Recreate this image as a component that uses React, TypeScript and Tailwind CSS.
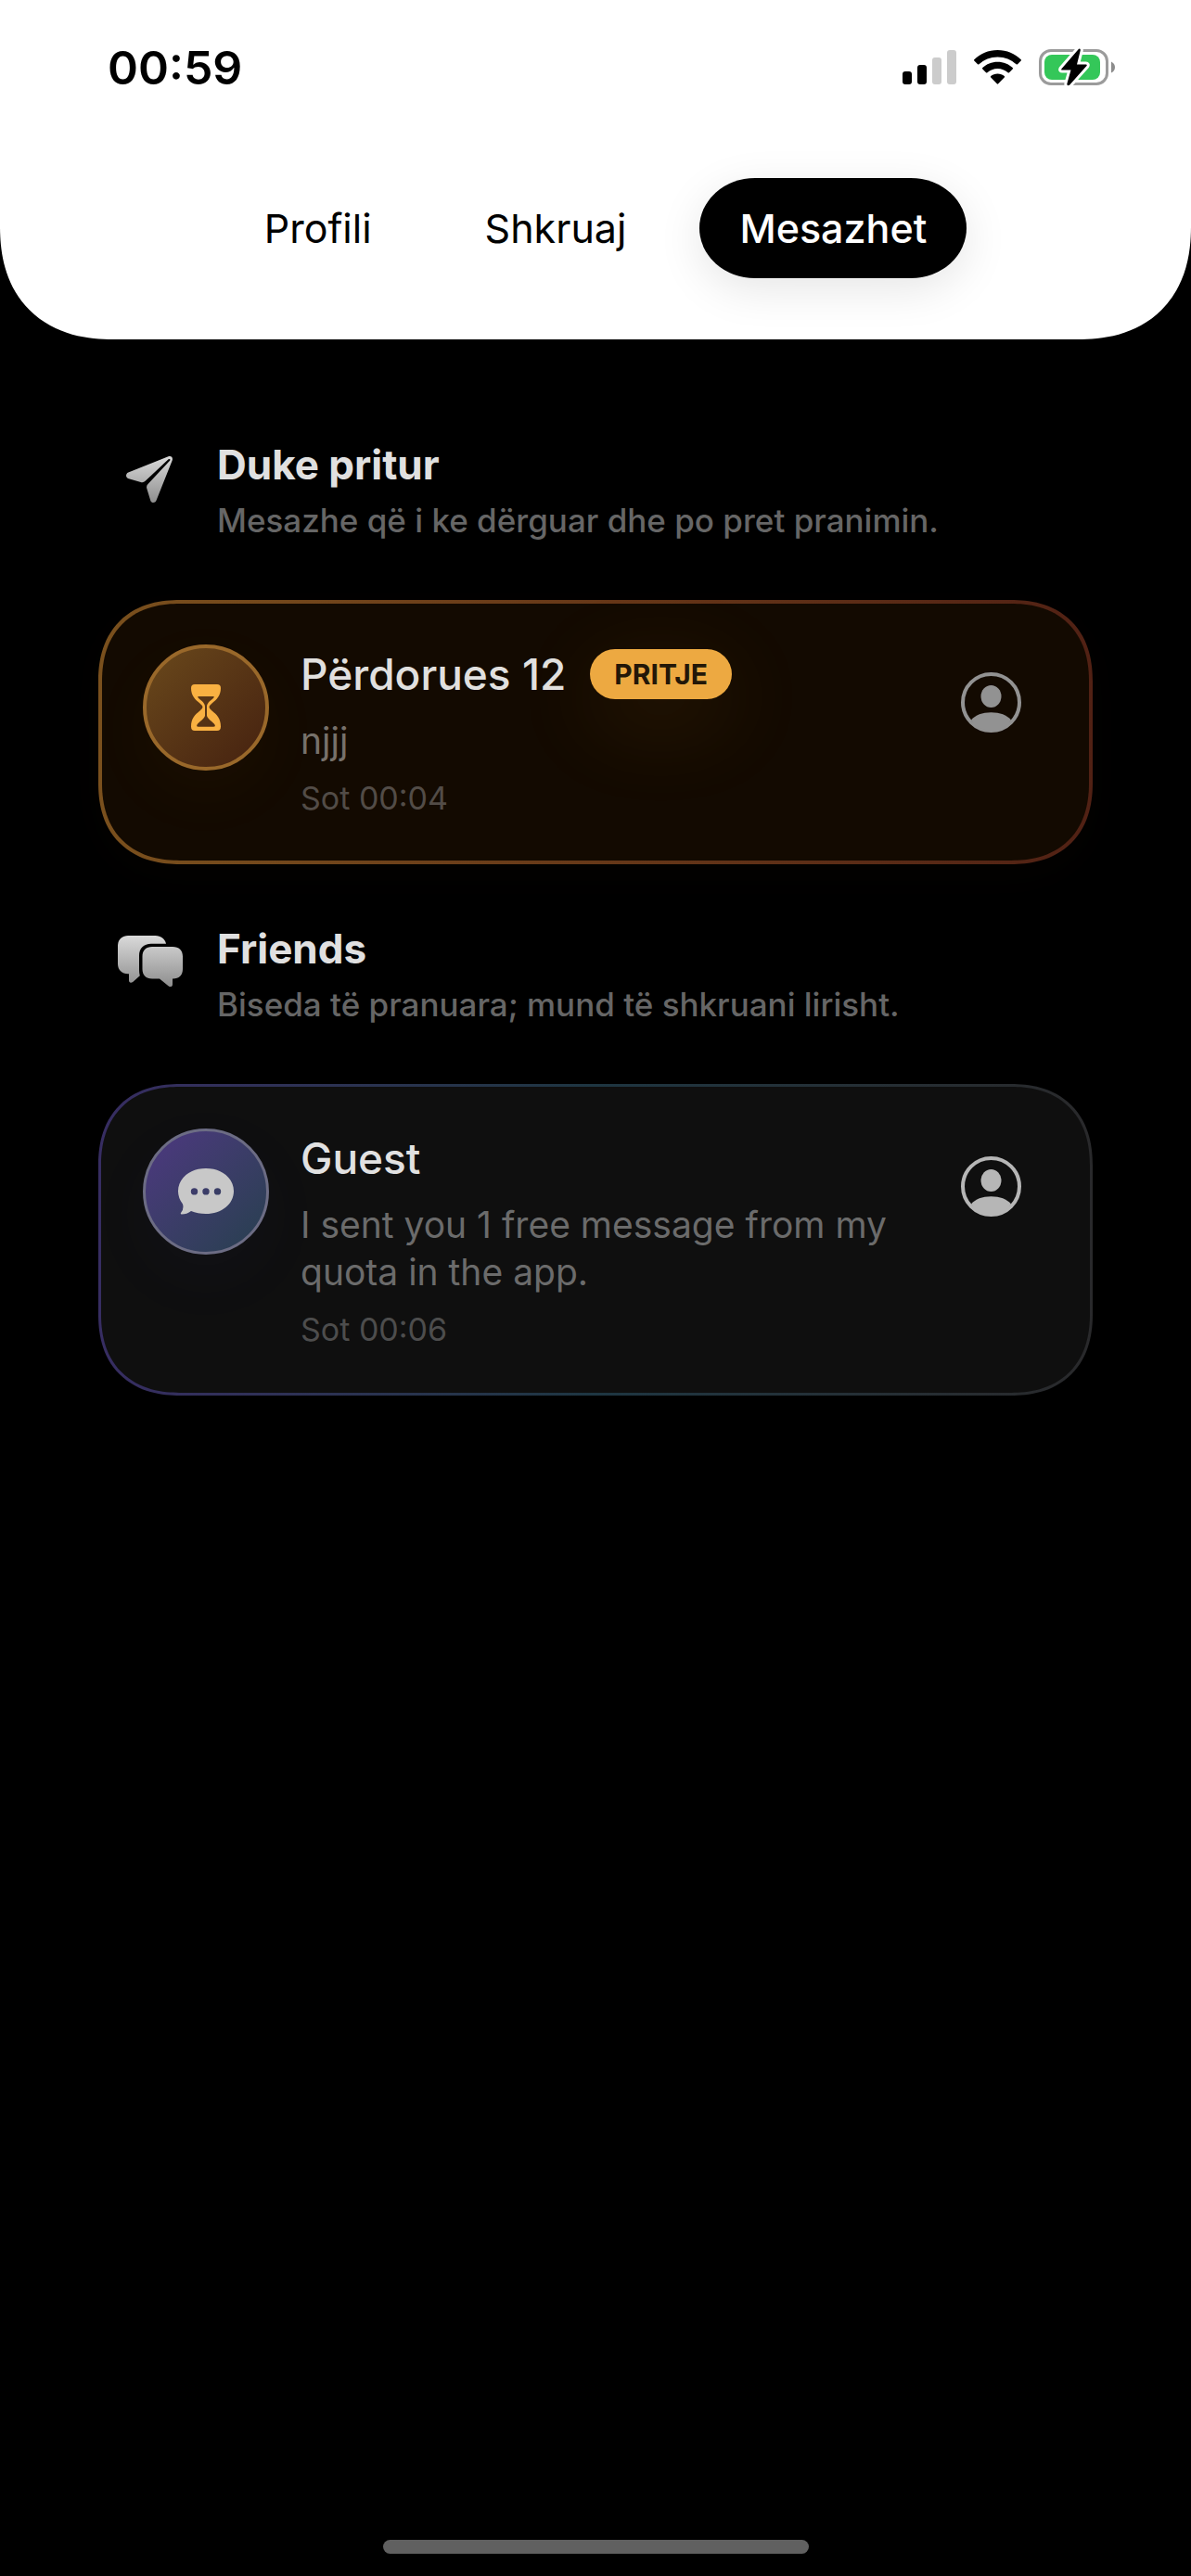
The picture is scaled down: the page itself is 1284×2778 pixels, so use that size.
import React from "react";

const TabBar: React.FC = () => {
  const tabs = ["Profili", "Shkruaj", "Mesazhet"];

  return (
    <nav className="flex items-center justify-center gap-9">
      {tabs.map((tab) => (
        <button
          key={tab}
          type="button"
          className={
            tab === "Mesazhet"
              ? "h-27 px-[43px] rounded-[60px/54px] bg-black text-white text-[43px] font-medium shadow-[0_12px_48px_rgba(0,0,0,0.1)]"
              : "h-27 px-[43px] text-black text-[43px]"
          }
        >
          {tab}
        </button>
      ))}
    </nav>
  );
};

const StatusBar: React.FC = () => {
  return (
    <div className="flex items-center justify-between pl-29 pr-[82px] h-[146px]">
      <span className="text-[50px] leading-none font-semibold">00:59</span>
      <div className="flex items-center">
        <svg width="58" height="38" viewBox="0 0 58 38" className="mr-[19px]">
          <rect x="0" y="23" width="10" height="14" rx="3" fill="#000" />
          <rect x="16" y="16" width="10" height="21" rx="3" fill="#000" />
          <rect x="32" y="8" width="10" height="29" rx="3" fill="#ccc" />
          <rect x="48" y="0" width="10" height="37" rx="3" fill="#ccc" />
        </svg>
        <svg width="51" height="38" viewBox="0 0 51 38" className="mr-[19px]">
          <path d="M25.500 0C35.500 0 44.200 3.900 50.700 10.200Q51.300 10.900 50.700 11.600L47 15.300Q46.300 15.900 45.600 15.300C40.300 10.400 33.300 7.400 25.500 7.400S10.700 10.400 5.400 15.300Q4.700 15.900 4 15.300L.3 11.600Q-.3 10.900 .3 10.200C6.800 3.900 15.500 0 25.500 0Z" />
          <path d="M25.500 12.700C31.900 12.700 37.500 15.100 41.700 19.100Q42.400 19.800 41.700 20.500L38 24.200Q37.300 24.800 36.600 24.200C33.600 21.500 29.800 19.900 25.500 19.900S17.400 21.500 14.400 24.200Q13.700 24.800 13 24.200L9.300 20.500Q8.600 19.800 9.300 19.100C13.500 15.100 19.100 12.700 25.500 12.700Z" />
          <path d="M25.500 25.500C28.300 25.500 30.900 26.500 32.800 28.100Q33.500 28.800 32.800 29.500L26.200 36.300Q25.500 37 24.800 36.300L18.200 29.500Q17.500 28.800 18.200 28.100C20.100 26.500 22.700 25.500 25.500 25.500Z" />
        </svg>
        <svg width="82" height="42" viewBox="0 0 82 42">
          <rect x="1.500" y="2.500" width="72" height="36" rx="11.500" fill="none" stroke="#9b9b9b" strokeWidth="3" />
          <path d="M78 14.500Q82 16.500 82 20.500T78 26.500Z" fill="#8c8c8c" />
          <rect x="6" y="7" width="60" height="27" rx="8" fill="#34c759" />
          <path
            d="M43 .8L24.400 22.200Q23.600 23.600 25.200 23.600H34.500L30.300 38.600Q30.300 41.200 33 39.800L51.500 19Q52.300 17.400 50.700 17.400H41L44.800 2.300Q44.900-.4 43 .8Z"
            fill="#000"
            stroke="#fff"
            strokeWidth="6"
            strokeLinejoin="round"
            paintOrder="stroke"
          />
        </svg>
      </div>
    </div>
  );
};

const PlaneIcon: React.FC = () => (
  <svg width="72" height="72" viewBox="0 0 72 72">
    <defs>
      <linearGradient id="plane" x1="0" y1="0" x2="0" y2="1">
        <stop offset="0" stopColor="#dadada" />
        <stop offset="1" stopColor="#8e8e8e" />
      </linearGradient>
    </defs>
    <g transform="translate(10 11)">
      <path
        fill="url(#plane)"
        d="M45.500 .2L2.300 17.400C-.5 18.600-.9 22.500 2 23.900L15.800 28Q18.600 28.800 20.600 26.800L45.600 3.300Q46.600 2.600 47.200 3.200T47.100 4.800L23.500 30Q21.600 32 22.200 34.500L26.300 48C27.500 50.800 31.300 50.700 32.500 47.800L49.700 4.500C50.700 1.500 48.600-.8 45.500 .2Z"
      />
    </g>
  </svg>
);

const BubblesIcon: React.FC = () => (
  <svg width="72" height="72" viewBox="0 0 72 72">
    <defs>
      <linearGradient id="bubbles" x1="0" y1="6" x2="0" y2="61" gradientUnits="userSpaceOnUse">
        <stop offset="0" stopColor="#dadada" />
        <stop offset="1" stopColor="#8e8e8e" />
      </linearGradient>
    </defs>
    <g fill="url(#bubbles)">
      <path d="M12 6H41.500C47.500 6 52 9.500 53 14.700H37C29 14.700 24 19.500 24 27.500V43Q24 46.500 24.800 49.200L17.200 56C15 57.600 13 56.800 13 54.300V47.200H12C5.500 47.200 1 43 1 36.500V17C1 10.500 5.500 6 12 6Z" />
      <path d="M38 18H60C67 18 71 22 71 28.500V42C71 48.500 67 52.500 60.500 52.500H60V58.500C60 61.300 57.500 61.800 55.500 60.200L46 52.500H38C31.500 52.500 27.500 48.500 27.500 42V28.500C27.500 22 31.500 18 38 18Z" />
    </g>
  </svg>
);

const HourglassIcon: React.FC = () => (
  <svg width="32" height="50" viewBox="0 0 32 50">
    <path
      fill="#f9b142"
      fillRule="evenodd"
      d="M4 0H28Q32 0 32 4C32 12 28 16 22.500 20.500Q19.500 23 19.500 24.500T22.500 28.500C28 33 32 37 32 45.500Q32 50 28 50H4Q0 50 0 45.500C0 37 4 33 9.500 28.500Q12.500 26 12.500 24.500T9.500 20.500C4 16 0 12 0 4Q0 0 4 0ZM8 13Q6.500 13 7.500 14.300C9.500 16.800 15 19.500 15 24V34C14 37.500 8.500 40.500 6.500 43.500Q5.300 45.800 8 45.800H24Q26.700 45.800 25.500 43.500C23.500 40.500 18 37.500 17 34V24C17 19.500 22.500 16.800 24.500 14.300Q25.500 13 24 13Z"
    />
  </svg>
);

const ChatIcon: React.FC = () => (
  <svg width="60" height="50" viewBox="0 0 60 50">
    <path
      fill="#c8c8c8"
      fillRule="evenodd"
      d="M30 0C47 0 60 10.500 60 24.500S47 49 30 49Q21 49 14 46Q9.500 49.500 3.800 49.500Q2 49.200 3.300 47.500Q6.500 43.500 5 38.500Q0 32 0 24.500C0 10.500 13 0 30 0ZM17.500 21.200A3.700 3.700 0 1 0 17.500 28.600A3.700 3.700 0 1 0 17.500 21.200ZM30 21.200A3.700 3.700 0 1 0 30 28.600A3.700 3.700 0 1 0 30 21.200ZM42.500 21.200A3.700 3.700 0 1 0 42.500 28.600A3.700 3.700 0 1 0 42.500 21.200Z"
    />
  </svg>
);

const PersonIcon: React.FC = () => (
  <svg width="65" height="65" viewBox="0 0 65 65" fill="currentColor">
    <circle cx="32.500" cy="32.500" r="30.500" fill="none" stroke="currentColor" strokeWidth="4" />
    <ellipse cx="32.500" cy="26" rx="11" ry="12" />
    <path d="M11 51.500C15.500 46 23 43.200 32.500 43.200S49.500 46 54 51.500C48.500 59 41 63 32.500 63S16.500 59 11 51.500Z" />
  </svg>
);

interface SectionTitleProps {
  icon: React.ReactNode;
  title: string;
  text: string;
}

const SectionTitle: React.FC<SectionTitleProps> = ({ icon, title, text }) => (
  <div className="flex items-start gap-9 px-5">
    <div className="pt-[7px] shrink-0">{icon}</div>
    <div>
      <h2 className="text-[44px] leading-[54px] font-bold text-[#e0e0e0]">{title}</h2>
      <p className="mt-3 text-[35px] leading-[42px] font-medium text-[#666]">{text}</p>
    </div>
  </div>
);

const App: React.FC = () => {
  return (
    <div className="min-h-screen flex flex-col bg-black font-[Inter,sans-serif]">
      <header className="h-[366px] bg-white rounded-b-[122px] [corner-shape:superellipse(1.2)]">
        <StatusBar />
        <div className="pt-[46px]">
          <TabBar />
        </div>
      </header>

      <main className="flex-1 flex flex-col gap-16 px-[106px] pt-27">
        <section>
          <SectionTitle
            icon={<PlaneIcon />}
            title="Duke pritur"
            text="Mesazhe që i ke dërguar dhe po pret pranimin."
          />
          <article className="mt-[65px] p-1 rounded-[88px] [corner-shape:superellipse(1.2)] bg-linear-to-r from-[#7a501d] via-[#673818] to-[#512114] shadow-[0_12px_48px_rgba(255,160,40,0.02)]">
            <div className="flex items-start p-11 rounded-[84px] [corner-shape:superellipse(1.2)] bg-[#130a01]">
              <div className="size-34 shrink-0 rounded-full border-4 border-[#99682a] bg-linear-to-br from-[#6b4a1c] to-[#44200f] bg-origin-border flex items-center justify-center shadow-[0_24px_80px_rgba(255,180,40,0.04)]">
                <HourglassIcon />
              </div>
              <div className="flex-1 min-w-0 pl-[34px] py-0.5">
                <div className="flex items-center gap-[26px]">
                  <h3 className="text-[46px] leading-[60px] font-medium text-[#e1e0df]">Përdorues 12</h3>
                  <span className="h-[54px] px-[26px] flex items-center rounded-full bg-[#eda941] text-[30px] font-bold text-[#231708] shadow-[0_24px_100px_rgba(255,170,50,0.12)]">
                    PRITJE
                  </span>
                </div>
                <p className="mt-4 text-[39px] leading-[51px] text-[#77716b]">njjj</p>
                <p className="mt-4 text-[34px] leading-[42px] text-[#524c47]">Sot 00:04</p>
              </div>
              <button
                type="button"
                aria-label="Profili"
                className="size-31 shrink-0 flex items-center justify-center text-[#929292]"
              >
                <PersonIcon />
              </button>
            </div>
          </article>
        </section>

        <section>
          <SectionTitle
            icon={<BubblesIcon />}
            title="Friends"
            text="Biseda të pranuara; mund të shkruani lirisht."
          />
          <article className="mt-[65px] p-[3px] rounded-[88px] [corner-shape:superellipse(1.2)] bg-linear-to-r from-[#372d62] via-[#1e3642] to-[#29292b]">
            <div className="flex items-start p-[45px] rounded-[85px] [corner-shape:superellipse(1.2)] bg-[#0f0f0f]">
              <div className="size-34 shrink-0 rounded-full border-3 border-[#6c6c84] bg-linear-to-br from-[#4e3782] to-[#253f4d] bg-origin-border flex items-center justify-center shadow-[0_24px_80px_rgba(110,90,255,0.04)]">
                <ChatIcon />
              </div>
              <div className="flex-1 min-w-0 pl-[34px] py-0.5">
                <h3 className="text-[46px] leading-[60px] font-medium text-[#e1e1e1]">Guest</h3>
                <p className="mt-4 text-[39px] leading-[51px] text-[#6b6b6b]">
                  I sent you 1 free message from my quota in the app.
                </p>
                <p className="mt-4 text-[34px] leading-[42px] text-[#4d4d4d]">Sot 00:06</p>
              </div>
              <button
                type="button"
                aria-label="Profili"
                className="size-31 shrink-0 flex items-center justify-center text-[#b6b6b6]"
              >
                <PersonIcon />
              </button>
            </div>
          </article>
        </section>
      </main>

      <footer className="flex justify-center pb-6">
        <div className="w-[459px] h-[15px] rounded-full bg-[#606060]" />
      </footer>
    </div>
  );
};

export default App;
